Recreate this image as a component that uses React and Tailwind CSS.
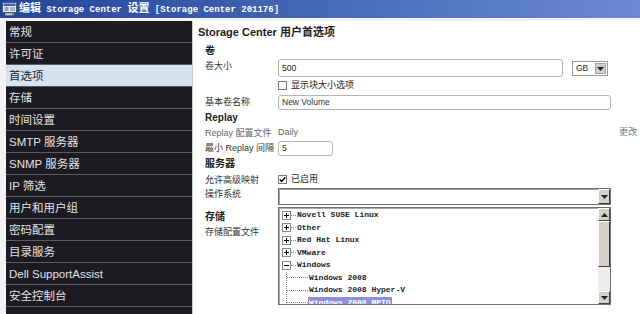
import React from 'react';

const menu = [
  '常规', '许可证', '首选项', '存储', '时间设置', 'SMTP 服务器', 'SNMP 服务器',
  'IP 筛选', '用户和用户组', '密码配置', '目录服务', 'Dell SupportAssist', '安全控制台', '',
];

const osRoots = [
  { name: 'Novell SUSE Linux', open: false },
  { name: 'Other', open: false },
  { name: 'Red Hat Linux', open: false },
  { name: 'VMware', open: false },
  { name: 'Windows', open: true },
];

const winChildren = ['Windows 2008', 'Windows 2008 Hyper-V', 'Windows 2008 MPIO'];

const Arrow = ({ up }) => (
  <svg width="7" height="4" viewBox="0 0 7 4">
    <path d={up ? 'M0 4 L3.5 0 L7 4 Z' : 'M0 0 L7 0 L3.5 4 Z'} fill="#222" />
  </svg>
);

const ExpandBox = ({ open }) => (
  <svg width="9" height="9" viewBox="0 0 9 9" className="shrink-0">
    <rect x="0.5" y="0.5" width="8" height="8" fill="#fff" stroke="#8a8a8a" />
    <path d="M2 4.5 H7" stroke="#000" />
    {!open && <path d="M4.5 2 V7" stroke="#000" />}
  </svg>
);

const Check = ({ checked }) => (
  <span className="w-[9px] h-[9px] border border-[#7a7a7a] bg-white flex items-center justify-center shrink-0">
    {checked && (
      <svg width="7" height="7" viewBox="0 0 7 7">
        <path d="M0.8 3.4 L2.7 5.4 L6.3 1.2" stroke="#000" strokeWidth="1.5" fill="none" />
      </svg>
    )}
  </span>
);

const Label = ({ children, className = '' }) => (
  <div className={`w-[73px] shrink-0 text-[9px] text-[#333] leading-[12px] ${className}`}>{children}</div>
);

const Header = ({ children }) => (
  <div className="text-[10px] font-bold text-[#222] leading-[12px]">{children}</div>
);

export default function App() {
  return (
    <div className="w-[640px] h-[314px] overflow-hidden bg-white flex flex-col font-['Liberation_Sans','Noto_Sans_CJK_SC',sans-serif]">
      {/* title bar */}
      <div className="h-[18px] shrink-0 flex items-center pl-[2px] bg-linear-to-r from-[#25449a] to-[#6b8cd2]">
        <svg width="15" height="14" viewBox="0 0 15 14" className="shrink-0">
          <rect x="0.5" y="0.5" width="14" height="10" fill="#e8eef8" stroke="#4a5a70" />
          <rect x="1.5" y="1.5" width="12" height="2.5" fill="#3a62b8" />
          <rect x="2.5" y="5" width="4" height="4" fill="#8aa4c8" />
          <rect x="8" y="5.5" width="5" height="1" fill="#6a7a90" />
          <rect x="8" y="7.5" width="5" height="1" fill="#6a7a90" />
          <rect x="3" y="11" width="9" height="2.5" fill="#c8d0dc" stroke="#4a5a70" strokeWidth="0.6" />
          <rect x="10" y="11.6" width="1.5" height="1.2" fill="#2a9a3a" />
        </svg>
        <span className="ml-[2px] font-bold text-white whitespace-nowrap font-['Liberation_Mono','Noto_Sans_CJK_SC',monospace] text-[9px] leading-none">
          <span className="text-[11px]">编辑</span> Storage Center <span className="text-[11px]">设置</span> [Storage Center 201176]
        </span>
      </div>

      <div className="flex flex-1 pt-[3px] pl-[6px] bg-[#f3f3f3] min-h-0">
        {/* sidebar */}
        <div className="w-[186px] shrink-0 bg-[#1c1b21] flex flex-col">
          {menu.map((m) => (
            <div
              key={m || 'blank'}
              className={`h-[22px] shrink-0 border-b border-[#5a5a60] flex items-center pl-[3px] pt-[2px] text-[11.5px] ${
                m === '首选项' ? 'bg-[#d5e3f1] text-[#222]' : 'text-[#e2e2e2]'
              }`}
            >
              {m}
            </div>
          ))}
        </div>

        {/* content */}
        <div className="flex-1 bg-white border-l border-[#cfcfcf] flex flex-col">
          <div className="h-[22px] shrink-0 flex items-center pl-[5px] text-[11px] font-bold text-[#222]">
            Storage Center 用户首选项
          </div>

          <div className="pl-[12px] pr-[29px] flex flex-col">
            <div className="h-[16px] flex items-center"><Header>卷</Header></div>

            <div className="h-[18px] flex items-start">
              <Label className="pt-[1px]">卷大小</Label>
              <div className="flex-1 flex items-start gap-[9px]">
                <div className="w-[285px] h-[18px] border border-[#b5b5b5] rounded-[3px] flex items-center pl-[3px] text-[8.5px] text-[#222]">500</div>
                <div className="w-[36px] h-[15px] mt-[2px] border border-[#9a9a9a] flex items-center">
                  <span className="flex-1 pl-[3px] text-[8.5px] text-[#222]">GB</span>
                  <span className="w-[11px] h-[11px] mr-[1px] bg-[#cfcfcf] border border-[#a0a0a0] flex items-center justify-center"><Arrow /></span>
                </div>
              </div>
            </div>

            <div className="h-[17px] flex items-center">
              <Label />
              <Check />
              <span className="ml-[4px] text-[9px] text-[#222]">显示块大小选项</span>
            </div>

            <div className="h-[16px] flex items-center">
              <Label>基本卷名称</Label>
              <div className="flex-1 h-[15px] border border-[#b5b5b5] rounded-[3px] flex items-center pl-[3px] text-[8.5px] text-[#333]">New Volume</div>
            </div>

            <div className="h-[16px] flex items-center"><Header>Replay</Header></div>

            <div className="h-[14px] flex items-center">
              <Label className="text-[#666]">Replay 配置文件</Label>
              <span className="flex-1 text-[9px] text-[#666]">Daily</span>
              <span className="-mr-[26px] text-[9px] text-[#6a7d92]">更改</span>
            </div>

            <div className="h-[16px] flex items-center">
              <Label>最小 Replay 间隔</Label>
              <div className="w-[55px] h-[15px] border border-[#b5b5b5] rounded-[3px] flex items-center pl-[3px] text-[8.5px] text-[#333]">5</div>
            </div>

            <div className="h-[16px] flex items-center"><Header>服务器</Header></div>

            <div className="h-[15px] flex items-center">
              <Label>允许高级映射</Label>
              <Check checked />
              <span className="ml-[4px] text-[9px] text-[#222]">已启用</span>
            </div>

            <div className="h-[18px] flex items-start">
              <Label className="pt-[1px]">操作系统</Label>
              <div className="flex-1 h-[17px] mt-px border border-[#6f6f6f] shadow-[inset_1px_1px_0_#a0a0a0] bg-white flex justify-end">
                <span className="w-[12px] h-full bg-[#d4d0c8] border-l border-t border-white border-r border-r-[#404040] border-b border-b-[#404040] flex items-center justify-center"><Arrow /></span>
              </div>
            </div>

            <div className="flex items-start">
              <div className="w-[73px] shrink-0 pt-[4px] flex flex-col">
                <div className="h-[16px] flex items-center"><Header>存储</Header></div>
                <div className="text-[9px] text-[#333] leading-[12px] mt-[1px]">存储配置文件</div>
              </div>
              <div className="flex-1 h-[98px] mt-[2px] border border-[#707070] shadow-[inset_1px_1px_0_#a8a8a8] bg-white flex overflow-hidden">
                <div className="flex-1 pt-px pl-[3px] overflow-hidden font-['Liberation_Mono',monospace] font-bold text-[8px] text-[#222]">
                  {osRoots.map((r) => (
                    <div key={r.name} className="h-[12.5px] flex items-center">
                      <ExpandBox open={r.open} />
                      <span className="w-[5px] border-t border-dotted border-[#808080]" />
                      <span className="ml-px whitespace-nowrap">{r.name}</span>
                    </div>
                  ))}
                  <div className="ml-[4px] border-l border-dotted border-[#808080]">
                    {winChildren.map((c, i) => (
                      <div key={c} className="h-[12.5px] flex items-center">
                        <span className="w-[21px] border-t border-dotted border-[#808080]" />
                        <span
                          className={`whitespace-nowrap px-px ${
                            i === 2 ? 'bg-[#8d90d4] text-white' : ''
                          }`}
                        >
                          {c}
                        </span>
                      </div>
                    ))}
                  </div>
                </div>
                <div className="w-[12px] shrink-0 flex flex-col bg-[#ececec]">
                  <span className="h-[13px] shrink-0 bg-[#d4d0c8] border-l border-t border-white border-r border-r-[#404040] border-b border-b-[#404040] flex items-center justify-center"><Arrow up /></span>
                  <span className="h-[46px] shrink-0 bg-[#d4d0c8] border-l border-t border-white border-r border-r-[#404040] border-b border-b-[#404040]" />
                  <span className="flex-1" />
                  <span className="h-[13px] shrink-0 bg-[#d4d0c8] border-l border-t border-white border-r border-r-[#404040] border-b border-b-[#404040] flex items-center justify-center"><Arrow /></span>
                </div>
              </div>
            </div>
          </div>
        </div>
      </div>
    </div>
  );
}
